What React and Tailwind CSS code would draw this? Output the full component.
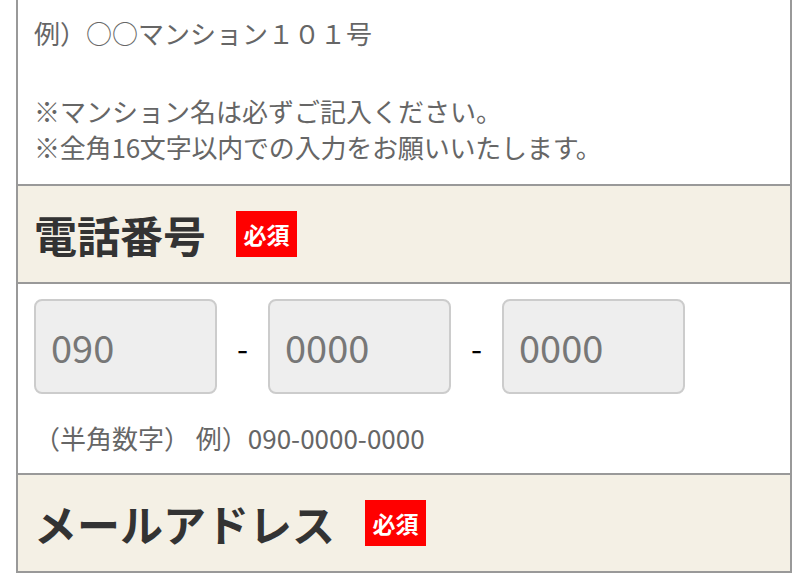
import React from 'react';

const jp = { fontFamily: '"Noto Sans CJK JP", "Noto Sans", sans-serif' };

function Badge() {
  return (
    <span className="inline-flex items-center justify-center w-[61px] h-[46px] bg-[#ff0000] text-white text-[23px] font-bold leading-none">
      必須
    </span>
  );
}

function Heading({ title }) {
  return (
    <div className="flex items-center h-[98px] bg-[#f4f0e5] border-b-2 border-[#999] pl-[16px]">
      <h2 className="text-[43px] font-bold text-[#333] leading-none mr-[30px]">{title}</h2>
      <Badge />
    </div>
  );
}

function TelInput({ value }) {
  return (
    <input
      readOnly
      placeholder={value}
      className="w-[183px] h-[95px] rounded-[8px] border-2 border-[#ccc] bg-[#eee] pl-[15px] text-[38px] placeholder:text-[#777] outline-none"
      style={jp}
    />
  );
}

function Dash() {
  return <span className="w-[51px] text-center text-[32px] text-black">-</span>;
}

export default function App() {
  return (
    <div className="bg-white min-h-[576px] px-4" style={jp}>
      <div className="border-x-2 border-[#999]">
        <div className="pt-[15px] pb-[19px] pl-[16px] border-b-2 border-[#999] text-[26px] leading-[36px] text-[#666]">
          <p className="mb-[42px]">例）○○マンション１０１号</p>
          <p>※マンション名は必ずご記入ください。</p>
          <p className="tracking-[-0.2px]">※全角16文字以内での入力をお願いいたします。</p>
        </div>

        <Heading title="電話番号" />

        <div className="pt-[15px] pb-[17px] pl-[16px] border-b-2 border-[#999]">
          <div className="flex items-center">
            <TelInput value="090" />
            <Dash />
            <TelInput value="0000" />
            <Dash />
            <TelInput value="0000" />
          </div>
          <p className="mt-[26px] text-[26px] leading-[36px] text-[#666]">（半角数字） 例）090-0000-0000</p>
        </div>

        <Heading title="メールアドレス" />
      </div>
    </div>
  );
}
